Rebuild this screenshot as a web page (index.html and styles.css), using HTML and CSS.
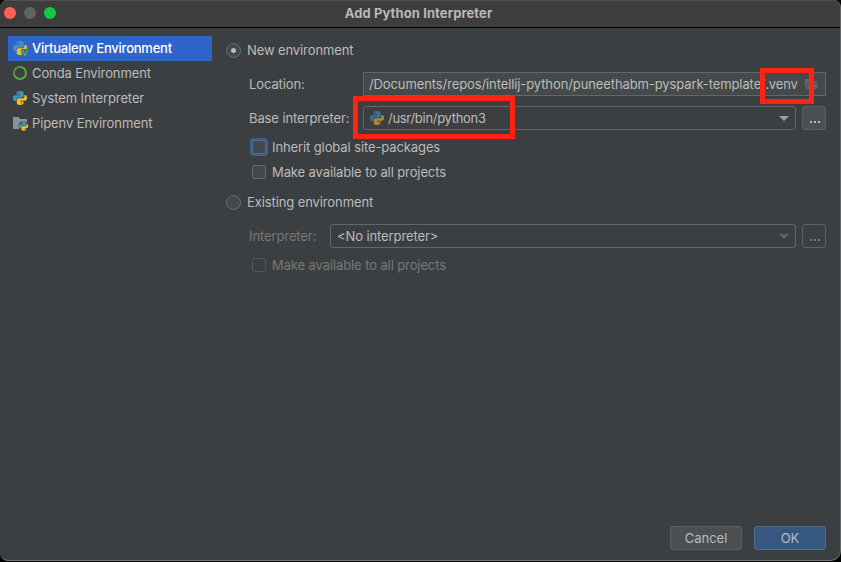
FILE: index.html
```html
<!DOCTYPE html>
<html lang="en">
<head>
<meta charset="utf-8">
<title>Add Python Interpreter</title>
<link rel="stylesheet" href="styles.css">
</head>
<body>
<svg class="defs" aria-hidden="true">
  <symbol id="python" viewBox="0 0 14 14">
    <path fill="#4295c5" d="M7 0C4.5 0 3.5.7 3.5 2v1.6h3.8v.6H2C.7 4.2 0 5.4 0 7.1s.7 2.9 2 2.9h1.3V8.300C3.300 7 4.200 6.500 5.300 6.500H8.800c1.100 0 1.800-.7 1.800-1.800V2C10.600.7 9.500 0 7 0Z"/>
    <path fill="#f4bd23" d="M7 14c2.500 0 3.600-.7 3.600-2v-1.600H6.900v-.6H12c1.300 0 2-1.200 2-2.800S13.300 4.100 12 4.100h-.6v1.300c0 1.200-.8 1.900-2 1.900H5.700c-1.200 0-1.900.7-1.900 1.800V12c0 1.300 1 2 3.200 2Z"/>
    <circle cx="5.300" cy="1.900" r=".65" fill="#34505f"/>
    <circle cx="8.800" cy="12.100" r=".65" fill="#705b20"/>
  </symbol>
</svg>
<div class="dialog">
  <header class="titlebar">
    <div class="lights"><i class="close"></i><i class="minimize"></i><i class="maximize"></i></div>
    <h1>Add Python Interpreter</h1>
  </header>
  <div class="content">
    <nav class="sidebar">
      <div class="item selected">
        <svg class="icon" viewBox="0 0 16 16"><use href="#python" width="14" height="14" x="0" y="1"/><path d="M8.300 9h7.700v7H9.300Z" fill="#2f65ca"/><path d="m9.300 9.800 2.700 5.700L14.700 9.800" fill="none" stroke="#55b34b" stroke-width="1.400"/></svg>
        <span>Virtualenv Environment</span>
      </div>
      <div class="item">
        <svg class="icon" viewBox="0 0 16 16"><circle cx="7" cy="8" r="6" fill="none" stroke="#56ad3d" stroke-width="2"/><path d="M1.300 9.500A6 6 0 0 1 6.500 2.300" fill="none" stroke="#3c3f41" stroke-width="1.200" stroke-dasharray=".8 1.400"/></svg>
        <span>Conda Environment</span>
      </div>
      <div class="item">
        <svg class="icon" viewBox="0 0 16 16"><use href="#python" width="14" height="14" x="0" y="1"/></svg>
        <span>System Interpreter</span>
      </div>
      <div class="item">
        <svg class="icon" viewBox="0 0 16 16"><path d="M0 2h5.500l1.500 2h7v10H0Z" fill="#87939a"/><circle cx="10.500" cy="11" r="5" fill="#3c3f41"/><use href="#python" width="9.500" height="9.500" x="5.800" y="6.300"/></svg>
        <span>Pipenv Environment</span>
      </div>
    </nav>
    <main class="form">
      <div class="row"><i class="radio checked"></i><span>New environment</span></div>
      <div class="row indent field-row">
        <label class="wide">Location:</label>
        <div class="textfield"><span>/Documents/repos/intellij-python/puneethabm-pyspark-template/.venv</span>
          <svg class="folder" viewBox="0 0 16 14"><path d="M1 2h5l1.500 2H13v2H4L1 11Z" fill="#5b676d"/><path d="M4.500 7H15l-2.500 5H1.500Z" fill="#5b676d"/></svg>
        </div>
      </div>
      <div class="row indent field-row">
        <label class="wide">Base interpreter:</label>
        <div class="combo">
          <svg class="combo-icon" viewBox="0 0 14 14"><use href="#python" width="14" height="14"/></svg>
          <span class="python-path">/usr/bin/python3</span><i class="arrow"></i>
        </div>
        <button class="more"><i></i><i></i><i></i></button>
      </div>
      <div class="row check-row after-field"><i class="check focused"></i><span>Inherit global site-packages</span></div>
      <div class="row check-row after-check"><i class="check"></i><span>Make available to all projects</span></div>
      <div class="row second"><i class="radio"></i><span>Existing environment</span></div>
      <div class="row indent field-row disabled">
        <label class="narrow">Interpreter:</label>
        <div class="combo"><span>&lt;No interpreter&gt;</span><i class="arrow"></i></div>
        <button class="more"><i></i><i></i><i></i></button>
      </div>
      <div class="row check-row after-field disabled"><i class="check"></i><span>Make available to all projects</span></div>
    </main>
  </div>
  <footer class="actions"><button class="btn">Cancel</button><button class="btn primary">OK</button></footer>
  <div class="mark mark-venv"></div>
  <div class="mark mark-python"></div>
</div>
</body>
</html>
```
FILE: styles.css
```css
* { box-sizing: border-box; }
body { margin: 0; background: #000; overflow: hidden; font: 13px/16px Inter, "Liberation Sans", sans-serif; letter-spacing: -0.105px; color: #bbb; }
.defs { position: absolute; width: 0; height: 0; }
.dialog { position: relative; display: flex; flex-direction: column; width: 841px; height: 561px; background: #3c3f41; border-right: 1px solid #646667; border-bottom: 1px solid #777; border-radius: 7px 7px 10px 8px; overflow: hidden; }
.titlebar { display: grid; grid-template-columns: 1fr auto 1fr; align-items: center; flex: none; height: 28px; padding: 0 7px 1px 4px; background: #3d3d3d; border-bottom: 1px solid #000; box-shadow: inset 0 1px #505050; }
.titlebar h1 { margin: 0; font-size: 13px; line-height: 16px; font-weight: 700; letter-spacing: 0.1px; color: #b8b8b8; white-space: nowrap; }
.lights { display: flex; gap: 8px; }
.lights i { width: 12px; height: 12px; border-radius: 50%; }
.close { background: #ff5f57; }
.minimize { background: #636363; }
.maximize { background: #14cb42; }
.content { display: flex; flex: 1; }
.sidebar { width: 204px; margin: 8px 14px 0 8px; }
.item { display: flex; align-items: center; height: 25px; padding: 0 0 1px 5px; gap: 3px; white-space: nowrap; }
.item.selected { background: #2f65ca; color: #fff; font-weight: 500; letter-spacing: -0.23px; }
.icon { width: 16px; height: 16px; }
.form { width: 600px; padding-top: 10px; }
.row { display: flex; align-items: center; height: 24px; white-space: nowrap; }
.indent { padding-left: 23px; }
.field-row { margin-top: 10px; }
.after-field { margin-top: 5px; }
.after-check { margin-top: 1px; }
.second { margin-top: 6px; }
.radio { display: grid; place-items: center; width: 15px; height: 15px; margin-right: 6px; border: 1px solid #6b6e6f; border-radius: 50%; background: #43494a; }
.radio.checked::after { content: ""; width: 5px; height: 5px; border-radius: 50%; background: #bbb; }
.wide { width: 114px; }
.narrow { width: 81px; }
.textfield, .combo { display: flex; align-items: center; flex: 1; min-width: 0; height: 24px; border: 1px solid #646667; padding-left: 5px; }
.textfield { background: #45494a; }
.combo { border-radius: 3px; padding: 0 6px; }
.python-path { letter-spacing: -0.3px; }
.folder { width: 16px; height: 14px; margin-left: 6px; }
.combo-icon { width: 14px; height: 14px; margin-right: 4px; opacity: .6; }
.arrow { margin-left: auto; border: 5px solid transparent; border-top-color: #9da0a2; border-bottom: 0; }
.more { display: flex; align-items: flex-end; justify-content: center; gap: 2px; width: 24px; height: 24px; margin-left: 6px; padding: 0 0 6px 2px; border: 1px solid #5e6060; border-radius: 3px; background: #4c5052; }
.more i { width: 2px; height: 2px; background: #bbb; }
.check-row { padding-left: 26px; }
.check { width: 14px; height: 14px; margin-right: 6px; border: 1px solid #6b6b6b; border-radius: 2px; background: #43494a; }
.focused { border-color: #466d94; box-shadow: 0 0 0 2px #3d6185; }
.disabled { color: #777; }
.disabled .combo { color: #bbb; }
.disabled .check { background: transparent; border-color: #555859; }
.disabled .arrow { border-top-color: #5c5f61; }
.disabled .more { background: transparent; }
.disabled .more i { background: #777; }
.actions { display: flex; justify-content: flex-end; gap: 12px; padding: 0 14px 10px; }
.btn { width: 72px; height: 24px; padding: 0; font: inherit; color: #bbb; background: #4c5052; border: 1px solid #5e6060; border-radius: 3px; }
.primary { background: #365880; border-color: #4c708c; }
.mark { position: absolute; border: 5px solid #ff2314; }
.mark-venv { left: 760px; top: 68px; width: 54px; height: 36px; }
.mark-python { left: 353px; top: 96px; width: 162px; height: 43px; }
```
